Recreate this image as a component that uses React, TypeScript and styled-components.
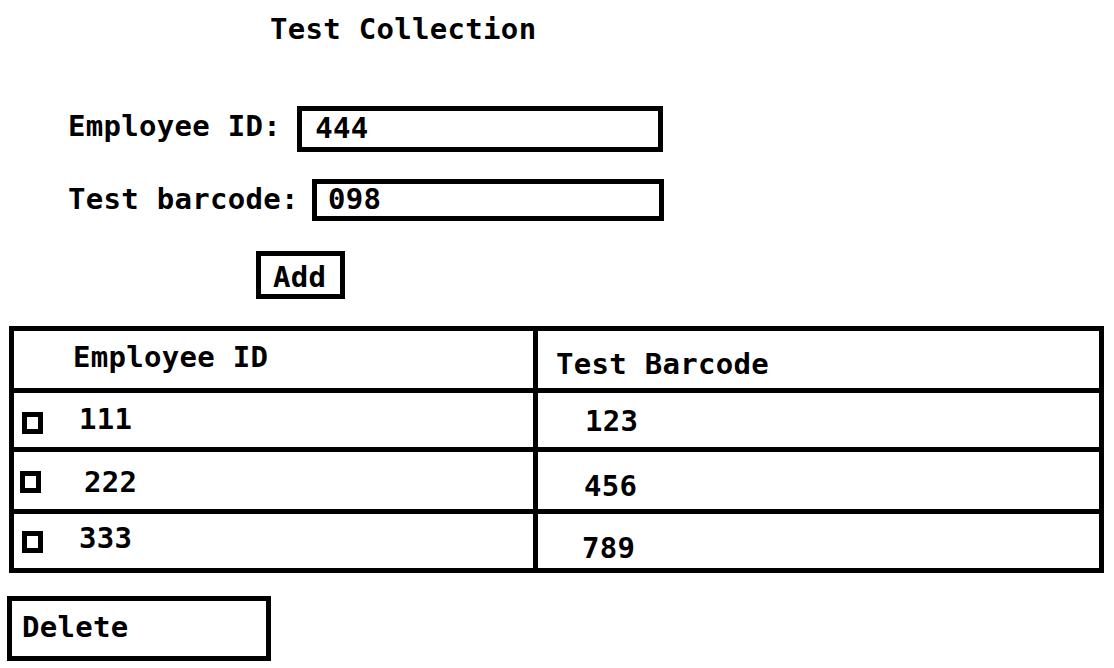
import React from "react";
import styled, { createGlobalStyle } from "styled-components";

const LINE = 5;

const GlobalStyle = createGlobalStyle`
  html, body {
    margin: 0;
    padding: 0;
    background: #fff;
  }
  body {
    font-family: "DejaVu Sans Mono", "Liberation Mono", monospace;
    font-weight: 700;
    font-size: 29px;
    letter-spacing: 0.3px;
    color: #000;
  }
`;

const Page = styled.div`
  width: 1114px;
  height: 668px;
  padding-top: 13px;
  box-sizing: border-box;
  display: flex;
  flex-direction: column;
  overflow: hidden;
`;

const Title = styled.h1`
  margin: 0;
  padding-left: 270px;
  font: inherit;
  line-height: 32px;
  height: 32px;
`;

const Form = styled.div`
  display: flex;
  flex-direction: column;
  gap: 27px;
  margin-top: 61px;
  padding-left: 68px;
`;

const FieldRow = styled.label<{ $gap: number }>`
  display: flex;
  align-items: center;
  gap: ${({ $gap }) => $gap}px;
`;

const FieldLabel = styled.span<{ $lift: number }>`
  line-height: 32px;
  margin-bottom: ${({ $lift }) => $lift}px;
`;

const TextBox = styled.input<{ $width: number; $height: number; $pad: number }>`
  box-sizing: border-box;
  width: ${({ $width }) => $width}px;
  height: ${({ $height }) => $height}px;
  border: ${LINE}px solid #000;
  border-radius: 0;
  padding: 0 0 3px ${({ $pad }) => $pad}px;
  font: inherit;
  letter-spacing: inherit;
  color: #000;
  background: #fff;
  outline: none;
`;

const Button = styled.button<{ $width: number; $height: number; $pad: number; $dy: number }>`
  box-sizing: border-box;
  width: ${({ $width }) => $width}px;
  height: ${({ $height }) => $height}px;
  border: ${LINE}px solid #000;
  border-radius: 0;
  background: #fff;
  color: #000;
  font: inherit;
  letter-spacing: inherit;
  line-height: 32px;
  text-align: left;
  padding: ${({ $dy }) => ($dy > 0 ? $dy * 2 : 0)}px 0
    ${({ $dy }) => ($dy < 0 ? -$dy * 2 : 0)}px ${({ $pad }) => $pad}px;
  cursor: pointer;
`;

const AddRow = styled.div`
  margin-top: 30px;
  padding-left: 256px;
`;

const Table = styled.div`
  margin-top: 27px;
  margin-left: 9px;
  width: 1095px;
  box-sizing: border-box;
  border: ${LINE}px solid #000;
  border-bottom: none;
`;

const Row = styled.div<{ $height: number }>`
  display: grid;
  grid-template-columns: 519px 1fr;
  height: ${({ $height }) => $height + LINE}px;
  box-sizing: border-box;
  border-bottom: ${LINE}px solid #000;
`;

const Cell = styled.div<{ $pad: number; $shift?: number; $divider?: boolean }>`
  display: flex;
  align-items: center;
  padding-left: ${({ $pad }) => $pad}px;
  padding-top: ${({ $shift = 0 }) => ($shift > 0 ? $shift * 2 : 0)}px;
  padding-bottom: ${({ $shift = 0 }) => ($shift < 0 ? -$shift * 2 : 0)}px;
  border-left: ${({ $divider }) => ($divider ? `${LINE}px solid #000` : "none")};
  line-height: 32px;
  box-sizing: border-box;
`;

const CellText = styled.span<{ $shift?: number }>`
  margin-top: ${({ $shift = 0 }) => ($shift > 0 ? $shift : 0) * 2}px;
  margin-bottom: ${({ $shift = 0 }) => ($shift < 0 ? -$shift : 0) * 2}px;
`;

const Checkbox = styled.span<{ $gap: number; $shift?: number }>`
  display: inline-block;
  box-sizing: border-box;
  width: 21px;
  height: 22px;
  border: ${LINE}px solid #000;
  margin-right: ${({ $gap }) => $gap}px;
  margin-top: ${({ $shift = 0 }) => ($shift > 0 ? $shift : 0) * 2}px;
  margin-bottom: ${({ $shift = 0 }) => ($shift < 0 ? -$shift : 0) * 2}px;
`;

const DeleteRow = styled.div`
  margin-top: 23px;
  padding-left: 7px;
`;

type Entry = {
  id: string;
  code: string;
  height: number;
  boxPad: number;
  boxShift: number;
  idGap: number;
  idShift: number;
  codePad: number;
  codeShift: number;
};

const entries: Entry[] = [
  { id: "111", code: "123", height: 54, boxPad: 8, boxShift: 3, idGap: 36, idShift: -1, codePad: 47, codeShift: 1 },
  { id: "222", code: "456", height: 57, boxPad: 6, boxShift: 1.5, idGap: 43, idShift: 1.5, codePad: 46, codeShift: 5.5 },
  { id: "333", code: "789", height: 54, boxPad: 8, boxShift: 0.5, idGap: 36, idShift: -3, codePad: 44, codeShift: 7 },
];

export default function App() {
  return (
    <>
      <GlobalStyle />
      <Page>
        <Title>Test Collection</Title>
        <Form>
          <FieldRow $gap={16}>
            <FieldLabel $lift={6}>Employee ID:</FieldLabel>
            <TextBox $width={366} $height={46} $pad={13} defaultValue="444" />
          </FieldRow>
          <FieldRow $gap={13}>
            <FieldLabel $lift={2}>Test barcode:</FieldLabel>
            <TextBox $width={352} $height={42} $pad={11} defaultValue="098" />
          </FieldRow>
        </Form>
        <AddRow>
          <Button $width={89} $height={48} $pad={12} $dy={1.5}>Add</Button>
        </AddRow>
        <Table>
          <Row $height={57}>
            <Cell $pad={59} $shift={-2.5}>Employee ID</Cell>
            <Cell $pad={18} $shift={4.5} $divider>Test Barcode</Cell>
          </Row>
          {entries.map((e) => (
            <Row key={e.id} $height={e.height}>
              <Cell $pad={e.boxPad}>
                <Checkbox $gap={e.idGap} $shift={e.boxShift} />
                <CellText $shift={e.idShift}>{e.id}</CellText>
              </Cell>
              <Cell $pad={e.codePad} $divider>
                <CellText $shift={e.codeShift}>{e.code}</CellText>
              </Cell>
            </Row>
          ))}
        </Table>
        <DeleteRow>
          <Button $width={264} $height={65} $pad={10} $dy={-2}>Delete</Button>
        </DeleteRow>
      </Page>
    </>
  );
}
